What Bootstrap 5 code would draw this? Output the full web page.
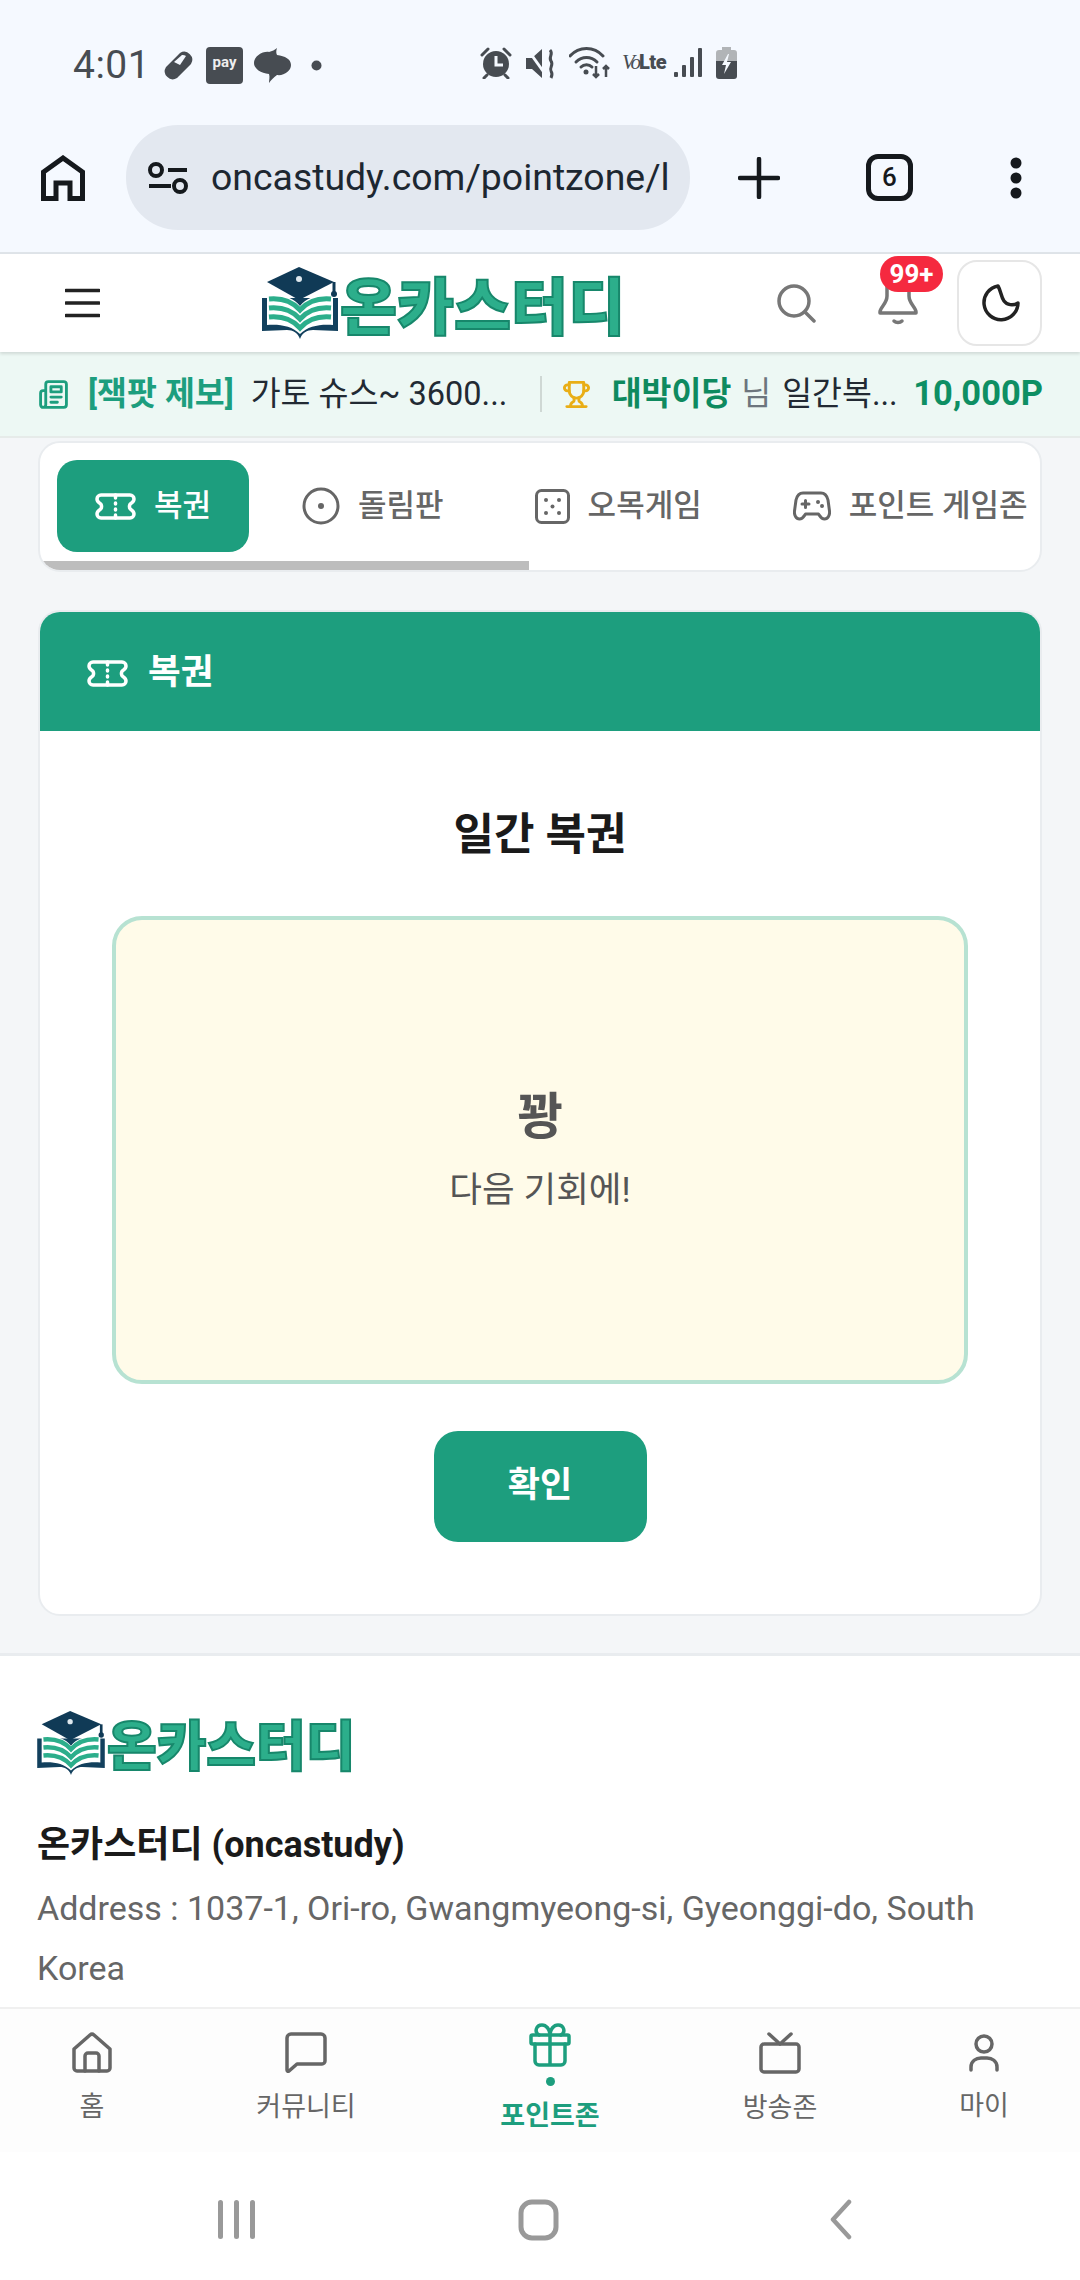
<!DOCTYPE html>
<html lang="ko">
<head>
  <meta charset="UTF-8" />
  <meta name="viewport" content="width=device-width, initial-scale=1" />
  <title>온카스터디 - 복권</title>
  <link href="https://cdn.jsdelivr.net/npm/bootstrap@5.3.2/dist/css/bootstrap.min.css" rel="stylesheet" />
  <style>
    html, body { height: 2280px; overflow: hidden; }
    body {
      font-family: Roboto, "Noto Sans CJK KR", sans-serif;
      background: #fff;
      color: #1a1a1a;
    }
    svg { display: block; flex: none; }
    .ico { fill: none; stroke: currentColor; stroke-linecap: round; stroke-linejoin: round; }

    /* phone + browser chrome */
    .phone-top { height: 254px; background: #f5f9ff; border-bottom: 2px solid #dfe4e9; flex: none; }
    .status-row { height: 125px; padding: 47px 0 0 73px; color: #474c52; }
    .status-time { font-size: 39px; line-height: 33px; width: 78px; letter-spacing: .5px; }
    .status-left { width: 407px; gap: 11px; }
    .pay-box {
      width: 37px; height: 37px; border-radius: 4px; background: #474c52; color: #eee;
      font-size: 15px; font-weight: 700; text-align: center; line-height: 30px;
    }
    .status-right { gap: 14px; }
    .volte { width: 44px; line-height: 30px; white-space: nowrap; margin: 0 -6px 0 -3px; color: #474c52; }
    .volte i { font-family: "Liberation Serif", serif; font-size: 21px; letter-spacing: -2px; }
    .volte b { font-size: 20px; font-weight: 900; letter-spacing: -.5px; }
    .browser-row { padding: 0 0 0 41px; height: 105px; color: #15191d; }
    .url-pill {
      width: 564px; height: 105px; margin-left: 41px; border-radius: 52px; background: #e3e8f0;
      padding: 0 20px 0 22px; gap: 23px; overflow: hidden;
    }
    .url-text { font-size: 37.400px; color: #1d2731; white-space: nowrap; }
    .tab-count {
      width: 47px; height: 47px; border: 5px solid #15191d; border-radius: 12px;
      font-size: 26px; font-weight: 500; line-height: 37px; text-align: center; margin-left: 86px;
    }

    /* site header */
    .site-head { height: 98px; background: #fff; padding: 0 38px 0 65px; flex: none; box-shadow: 0 2px 3px rgba(0,0,0,.12); position: relative; z-index: 2; }
    .brand-word {
      font-family: "Noto Sans CJK KR", sans-serif; font-weight: 900; color: #2cae8b;
      -webkit-text-stroke: 2px #17876b; white-space: nowrap; letter-spacing: 0;
    }
    .brand-lg { font-size: 62px; line-height: 72px; margin-left: 2px; }
    .brand-sm { font-size: 54px; line-height: 64px; margin-left: 2px; }
    .head-logo { margin-left: 162px; width: 514px; }
    .bell-wrap { position: relative; width: 40px; margin-left: 62px; color: #777; }
    .bell-badge {
      position: absolute; left: 2px; top: -24px; width: 63px; height: 36px; border-radius: 18px;
      background: #f5293f; color: #fff; font-size: 26px; font-weight: 700; line-height: 36px; text-align: center;
    }
    .moon-btn {
      width: 85px; height: 86px; border: 2px solid #e6e6e6; border-radius: 20px; margin-left: 39px; background: #fff;
    }

    /* ticker */
    .ticker { height: 86px; background: #edf8f4; padding: 0 37px 0 38px; flex: none; font-size: 32.5px; white-space: nowrap; border-bottom: 2px solid #e6ebe9; }
    .tick-tag { color: #1d9e7e; font-weight: 700; margin-left: 19px; }
    .tick-msg { color: #222a33; margin-left: 17px; width: 260px; flex: none; }
    .tick-line { width: 2px; height: 36px; background: #cfd8d4; margin: 0 20px 0 29px; }
    .tick-name { color: #0e8a5f; font-weight: 700; margin-left: 21px; }
    .tick-nim { color: #6c757d; margin-left: 10px; }
    .tick-msg2 { color: #222a33; margin-left: 11px; }
    .tick-pt { color: #0e8f63; font-weight: 700; font-size: 34.5px; margin-left: auto; }

    /* main */
    .page-main { background: #f4f6f8; padding: 3px 38px 40px; flex: none; height: 1218px; border-bottom: 3px solid #e9ecef; }
    .game-tabs { height: 131px; border: 2px solid #e9ecef; border-radius: 22px; background: #fff; overflow: hidden; }
    .tab-strip { height: 118px; padding: 17px 0 0 17px; gap: 15px; white-space: nowrap; }
    .tab-item {
      height: 92px; padding: 0 38px; gap: 18px; border-radius: 20px; font-size: 31px; font-weight: 500;
      color: #666; flex: none;
    }
    .tab-item.on { background: #1d9e7e; color: #fff; }
    .tab-scroll { width: 489px; height: 10px; background: #bdbdbd; }
    .game-card { margin-top: 38px; height: 1006px; border: 2px solid #e9ecef; border-radius: 22px; background: #fff; overflow: hidden; }
    .game-card-head { height: 121px; margin: -2px -2px 0; background: #1d9e7e; color: #fff; padding: 5px 50px 0 49px; gap: 20px; font-size: 35.500px; font-weight: 700; }
    .game-title { font-size: 44px; font-weight: 700; line-height: 60px; text-align: center; margin-top: 74px; color: #1a1a1a; }
    .lotto-box {
      width: 856px; height: 468px; margin: 51px auto 0; border: 4px solid #b7e2d2; border-radius: 30px; background: #fffbe9;
      color: #555;
    }
    .lotto-big { font-size: 50px; font-weight: 700; line-height: 64px; }
    .lotto-sub { font-size: 35.500px; line-height: 50px; margin-top: 16px; }
    .ok-btn {
      width: 213px; height: 111px; margin: 47px auto 0; border-radius: 24px; background: #1d9e7e; color: #fff;
      font-size: 35px; font-weight: 700; border: 0; display: block;
    }

    /* footer */
    .site-foot { flex: 1 1 0; min-height: 0; padding: 55px 37px 0; overflow: hidden; background: #fff; }
    .foot-name { font-size: 36px; font-weight: 700; line-height: 50px; margin-top: 45px; }
    .foot-addr { font-size: 34px; line-height: 60px; color: #666; margin: 8px 0 0; }

    /* bottom tabs */
    .bottom-tabs { height: 145px; flex: none; background: #fdfdfd; border-top: 2px solid #f0f0f0; color: #666; font-size: 27px; padding-bottom: 4px; }
    .bt-item { gap: 16px; line-height: 36px; }
    .bt-item.on { color: #1d9e7e; font-weight: 700; gap: 0; }
    .bt-home { width: 184px; }
    .bt-wide { width: 244px; }
    .bt-tv { width: 216px; }
    .bt-my { width: 192px; }
    .bt-dot { width: 9px; height: 9px; border-radius: 50%; background: #1d9e7e; margin: 10px 0 12px; }
    .android-nav { height: 128px; flex: none; background: #fff; color: #999; padding: 7px 228px 0 218px; }
    .nav-bars { gap: 11px; }
    .nav-bars span { width: 5px; height: 39px; border-radius: 3px; background: #999; }
    .nav-home { margin-right: 8px; }
  </style>
</head>
<body class="d-flex flex-column">

<div class="phone-top">
  <div class="status-row d-flex align-items-start">
    <div class="status-left d-flex align-items-center">
      <div class="status-time">4:01</div>
      <svg width="33" height="33" viewBox="0 0 33 33"><path d="M4 18 18 4a8 8 0 0 1 11 11L15 29A8 8 0 0 1 4 18Z" fill="#474c52"/><path d="m14 11 8-7a6 6 0 0 1 4 1l-6 9z" fill="#f5f9ff" transform="translate(-2 2)"/></svg>
      <div class="pay-box">pay</div>
      <svg width="38" height="35" viewBox="0 0 38 35"><path d="M23 0c-1 3-1 5 0 7 8 1 14 4 14 10 0 6-7 11-14 10-3 2-6 5-8 8 0-3 1-6 0-9C7 25 0 21 0 15 0 8 9 3 15 4c3-1 6-2 8-4Z" fill="#474c52"/></svg>
      <svg class="ms-2" width="11" height="11" viewBox="0 0 11 11"><circle cx="5.500" cy="5.500" r="5" fill="#474c52"/></svg>
    </div>
    <div class="status-right d-flex align-items-center">
      <svg width="32" height="32" viewBox="0 0 32 32"><path d="M2 8 8 2M30 8l-6-6M7 28l-3 3M25 28l3 3" stroke="#474c52" stroke-width="3" stroke-linecap="round"/><circle cx="16" cy="17" r="13" fill="#474c52"/><path d="M16 9v9h7" stroke="#f5f9ff" stroke-width="3" fill="none"/></svg>
      <svg width="29" height="31" viewBox="0 0 29 31"><path d="M0 10h6l10-9v29L6 21H0Z" fill="#474c52"/><path d="M2 2l20 28" stroke="#f5f9ff" stroke-width="3"/><path d="M24 2c4 4-2 7 1 11s-2 7 0 10 1 5 0 7" fill="none" stroke="#474c52" stroke-width="3"/></svg>
      <svg width="42" height="32" viewBox="0 0 42 32"><g fill="none" stroke="#474c52" stroke-width="3" stroke-linecap="round"><path d="M1 9c9-10 24-10 33 0"/><path d="M7 15c6-6 15-6 21 0"/><path d="M12 20c3-3 8-3 11 0"/></g><circle cx="17" cy="25" r="2.500" fill="#474c52"/><path d="M27 19v11m-3-3 3 3 3-3M37 30V19m-3 3 3-3 3 3" fill="none" stroke="#474c52" stroke-width="2.500"/></svg>
      <div class="volte"><i>Vo</i><b>Lte</b></div>
      <svg width="28" height="30" viewBox="0 0 28 30"><g fill="#474c52"><rect x="0" y="24" width="4" height="5" rx="1"/><rect x="8" y="17" width="4" height="12" rx="1"/><rect x="16" y="9" width="4" height="20" rx="1"/><rect x="24" y="0" width="4" height="29" rx="1"/></g></svg>
      <svg width="21" height="32" viewBox="0 0 21 32"><path d="M6 0h9v3h3a3 3 0 0 1 3 3v8H0V6a3 3 0 0 1 3-3h3Z" fill="#b1b4b7"/><path d="M0 14h21v15a3 3 0 0 1-3 3H3a3 3 0 0 1-3-3Z" fill="#474c52"/><path d="m12 7-6 11h4l-2 9 7-12h-4l2-8Z" fill="#f5f9ff"/></svg>
    </div>
  </div>
  <div class="browser-row d-flex align-items-center">
    <svg width="44" height="46" viewBox="0 0 44 46"><path d="M2.500 43.500V17L22 3l19.500 14v26.500H29V28H15v15.500Z" fill="none" stroke="#15191d" stroke-width="5"/></svg>
    <div class="url-pill d-flex align-items-center">
      <svg width="40" height="32" viewBox="0 0 40 32"><g fill="none" stroke="#15191d" stroke-width="4"><circle cx="8" cy="8" r="6"/><circle cx="32" cy="24" r="6"/></g><path d="M20 8h19M1 24h22" stroke="#15191d" stroke-width="4"/></svg>
      <div class="url-text">oncastudy.com/pointzone/l</div>
    </div>
    <svg class="plus-ico" style="margin-left:48px" width="42" height="42" viewBox="0 0 42 42"><path d="M21 2v38M2 21h38" stroke="#15191d" stroke-width="4.500" stroke-linecap="round"/></svg>
    <div class="tab-count">6</div>
    <svg style="margin-left:97px" width="12" height="42" viewBox="0 0 12 42"><g fill="#15191d"><circle cx="6" cy="6" r="5.500"/><circle cx="6" cy="21" r="5.500"/><circle cx="6" cy="36" r="5.500"/></g></svg>
  </div>
</div>

<header class="site-head d-flex align-items-center">
  <svg width="35" height="30" viewBox="0 0 35 30"><path d="M1 2.500h33M1 15h33M1 27.500h33" stroke="#222" stroke-width="3.500" stroke-linecap="round"/></svg>
  <div class="head-logo d-flex align-items-center">
    <svg width="76" height="72" viewBox="0 0 76 72"><use href="#logo-mark"/></svg>
    <span class="brand-word brand-lg">온카스터디</span>
  </div>
  <svg class="ico" width="40" height="40" viewBox="0 0 40 40" style="color:#777" stroke-width="3.500"><circle cx="18" cy="18" r="15"/><path d="m29 29 9 9"/></svg>
  <div class="bell-wrap">
    <svg class="ico" width="40" height="46" viewBox="0 0 40 46" stroke-width="3.500"><path d="M9 2v14c0 8-7 11-7 16v1h36v-1c0-5-7-8-7-16V2"/><path d="M16 41c2 2 6 2 8 0"/></svg>
    <div class="bell-badge">99+</div>
  </div>
  <div class="moon-btn d-flex align-items-center justify-content-center">
    <svg class="ico" width="40" height="40" viewBox="0 0 40 40" stroke-width="3.500" style="color:#222"><path d="M18 3A17 17 0 1 0 38 20C33 23 27 22 24 18C21 14 21 8 18 3Z"/></svg>
  </div>
</header>

<div class="ticker d-flex align-items-center">
  <svg class="ico" width="31" height="31" viewBox="0 0 24 24" stroke-width="2.200" style="color:#1d9e7e"><path d="M4 22h16a2 2 0 0 0 2-2V4a2 2 0 0 0-2-2H8a2 2 0 0 0-2 2v16a2 2 0 0 1-2 2Zm0 0a2 2 0 0 1-2-2v-9c0-1.100.9-2 2-2h2"/><path d="M18 14h-8M15 18h-5M10 6h8v4h-8z"/></svg>
  <span class="tick-tag">[잭팟 제보]</span>
  <span class="tick-msg">가토 슈스~ 3600...</span>
  <span class="tick-line"></span>
  <svg class="ico" width="29" height="31" viewBox="0 0 24 24" stroke-width="2.400" style="color:#e9ae16"><path d="M6 9H4.500a2.500 2.500 0 0 1 0-5H6M18 9h1.500a2.500 2.500 0 0 0 0-5H18M4 22h16M10 14.700V17c0 .6-.5 1-1 1.200C7.800 18.800 7 20.300 7 22M14 14.700V17c0 .6.500 1 1 1.200 1.200.6 2 2.100 2 3.800"/><path d="M18 2H6v7a6 6 0 0 0 12 0V2Z"/></svg>
  <span class="tick-name">대박이당</span>
  <span class="tick-nim">님</span>
  <span class="tick-msg2">일간복...</span>
  <span class="tick-pt">10,000P</span>
</div>

<main class="page-main">
  <div class="game-tabs">
    <div class="tab-strip d-flex">
      <div class="tab-item on d-flex align-items-center">
        <svg class="ico" width="41" height="27" viewBox="0 0 41 27" stroke-width="3.500"><use href="#ticket"/></svg>복권
      </div>
      <div class="tab-item d-flex align-items-center">
        <svg class="ico" width="38" height="38" viewBox="0 0 38 38" stroke-width="3"><circle cx="19" cy="19" r="17"/><circle cx="19" cy="19" r="3" fill="currentColor" stroke="none"/></svg>돌림판
      </div>
      <div class="tab-item d-flex align-items-center">
        <svg width="35" height="35" viewBox="0 0 35 35"><rect x="1.500" y="1.500" width="32" height="32" rx="5" fill="none" stroke="currentColor" stroke-width="3"/><g fill="currentColor"><circle cx="11" cy="11" r="2"/><circle cx="24" cy="11" r="2"/><circle cx="17.500" cy="17.500" r="2"/><circle cx="11" cy="24" r="2"/><circle cx="24" cy="24" r="2"/></g></svg>오목게임
      </div>
      <div class="tab-item d-flex align-items-center">
        <svg class="ico" width="38" height="30" viewBox="0 0 38 30" stroke-width="3"><path d="M10 2h18c4 0 6 3 7 7l1.500 11c.5 4-1.500 8-5 8-3 0-4-2-6-5H12.500c-2 3-3 5-6 5-3.500 0-5.500-4-5-8L3 9c1-4 3-7 7-7Z"/><path d="M9 13h7M12.500 9.500v7"/><path d="M25 11h.01M29 15h.01" stroke-width="4"/></svg>포인트 게임존
      </div>
    </div>
    <div class="tab-scroll"></div>
  </div>

  <section class="game-card">
    <div class="game-card-head d-flex align-items-center">
      <svg class="ico" width="41" height="27" viewBox="0 0 41 27" stroke-width="3.500"><use href="#ticket"/></svg>복권
    </div>
    <h2 class="game-title">일간 복권</h2>
    <div class="lotto-box d-flex flex-column align-items-center justify-content-center">
      <div class="lotto-big">꽝</div>
      <div class="lotto-sub">다음 기회에!</div>
    </div>
    <button type="button" class="ok-btn">확인</button>
  </section>
</main>

<footer class="site-foot">
  <div class="d-flex align-items-center">
    <svg width="68" height="64" viewBox="0 0 76 72"><use href="#logo-mark"/></svg>
    <span class="brand-word brand-sm">온카스터디</span>
  </div>
  <div class="foot-name">온카스터디 (oncastudy)</div>
  <p class="foot-addr">Address : 1037-1, Ori-ro, Gwangmyeong-si, Gyeonggi-do, South Korea</p>
</footer>

<nav class="bottom-tabs d-flex align-items-center">
  <div class="bt-item bt-home d-flex flex-column align-items-center">
    <svg class="ico" width="40" height="41" viewBox="0 0 40 41" stroke-width="3.500"><path d="M2 17 18 3a3 3 0 0 1 4 0l16 14v19a3 3 0 0 1-3 3H5a3 3 0 0 1-3-3Z"/><path d="M13 39V24a3 3 0 0 1 3-3h8a3 3 0 0 1 3 3v15"/></svg>
    <span>홈</span>
  </div>
  <div class="bt-item bt-wide d-flex flex-column align-items-center">
    <svg class="ico" width="42" height="41" viewBox="0 0 42 41" stroke-width="3.500"><path d="M6 2h30a4 4 0 0 1 4 4v23a3 3 0 0 1-3 3H12l-8 7c-1 .8-2 0-2-1V6a4 4 0 0 1 4-4Z"/></svg>
    <span>커뮤니티</span>
  </div>
  <div class="bt-item bt-wide on d-flex flex-column align-items-center">
    <svg class="ico" width="42" height="44" viewBox="0 0 42 44" stroke-width="3.500"><rect x="2" y="12" width="38" height="9" rx="1.500"/><path d="M21 12v30M6 21v17a4 4 0 0 0 4 4h22a4 4 0 0 0 4-4V21"/><path d="M21 12C21 6 17 2 13 2 7 2 5 9 10 12M21 12C21 6 25 2 29 2c6 0 8 7 3 10"/></svg>
    <span class="bt-dot"></span>
    <span>포인트존</span>
  </div>
  <div class="bt-item bt-tv d-flex flex-column align-items-center">
    <svg class="ico" width="42" height="42" viewBox="0 0 42 42" stroke-width="3.500"><rect x="2" y="12" width="38" height="28" rx="3"/><path d="m10 2 11 10L32 2"/></svg>
    <span>방송존</span>
  </div>
  <div class="bt-item bt-my d-flex flex-column align-items-center">
    <svg class="ico" width="30" height="38" viewBox="0 0 30 38" stroke-width="3.500"><circle cx="15" cy="10" r="8"/><path d="M2 36v-3c0-6 5-9 10-9h6c5 0 10 3 10 9v3"/></svg>
    <span>마이</span>
  </div>
</nav>

<div class="android-nav d-flex align-items-center justify-content-between">
  <div class="nav-bars d-flex"><span></span><span></span><span></span></div>
  <svg class="nav-home" width="41" height="42" viewBox="0 0 41 42"><rect x="3" y="3" width="35" height="36" rx="11" fill="none" stroke="#999" stroke-width="5"/></svg>
  <svg width="23" height="41" viewBox="0 0 23 41"><path d="M20 3 4 20.500 20 38" fill="none" stroke="#999" stroke-width="4.500" stroke-linecap="round" stroke-linejoin="round"/></svg>
</div>

<svg width="0" height="0" style="position:absolute">
  <defs>
    <g id="ticket">
      <path d="M6 2h29a4 4 0 0 1 4 4c0 2-1 3-2.500 4a4 4 0 0 0 0 7c1.500 1 2.500 2 2.500 4a4 4 0 0 1-4 4H6a4 4 0 0 1-4-4c0-2 1-3 2.500-4a4 4 0 0 0 0-7C3 9 2 8 2 6a4 4 0 0 1 4-4Z"/>
      <path d="M20.500 2v3M20.500 10v1M20.500 16v1M20.500 22v3"/>
    </g>
    <g id="logo-mark">
      <path d="M0 31v33l25-1c6 0 11 3 13 9 2-6 7-9 13-9l25 1V31Z" fill="#12405d"/>
      <path d="M5 29c13-2 25 0 33 10 8-10 20-12 33-10v29c-13-1-25 1-33 9-8-8-20-10-33-9Z" fill="#fff"/>
      <g fill="none" stroke="#2cae8b" stroke-width="5">
        <path d="M7 32c11-1 22 1 31 11 9-10 20-12 31-11"/>
        <path d="M7 41c11-1 22 1 31 11 9-10 20-12 31-11"/>
        <path d="M7 50c11-1 22 1 31 11 9-10 20-12 31-11"/>
      </g>
      <path d="M37 0 5 15l32 18 35-18Z" fill="#103a56"/>
      <circle cx="37" cy="12" r="3" fill="#dfe8ee"/>
      <path d="M72 15v10" stroke="#103a56" stroke-width="3"/>
      <circle cx="72" cy="27" r="3" fill="#103a56"/>
    </g>
  </defs>
</svg>

<script src="https://cdn.jsdelivr.net/npm/bootstrap@5.3.2/dist/js/bootstrap.bundle.min.js"></script>
</body>
</html>
